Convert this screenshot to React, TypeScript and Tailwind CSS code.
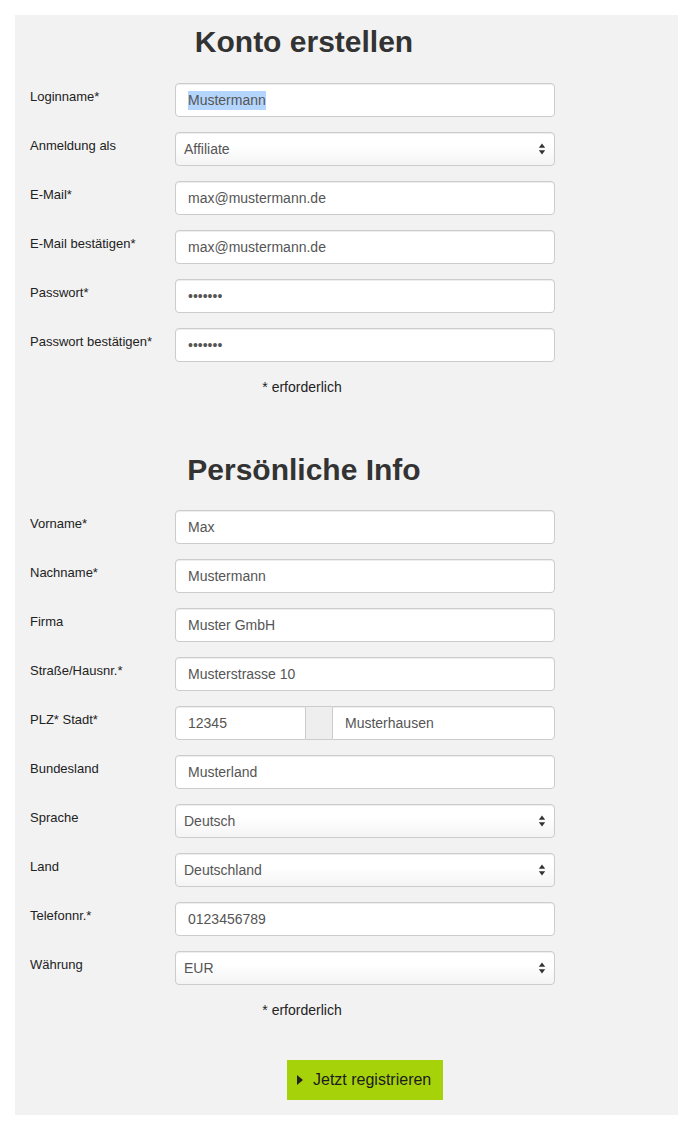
import React from 'react';

const font = { fontFamily: '"Liberation Sans", Arial, Helvetica, sans-serif' };

const inputBox =
  'h-[34px] w-[380px] shrink-0 bg-white border border-[#cccccc] rounded-[4px] shadow-[inset_0_1px_1px_rgba(0,0,0,0.075)] flex items-center text-[14px] text-[#555555]';

const SelectArrows: React.FC = () => (
  <svg width="8" height="14" viewBox="0 0 8 14" className="absolute right-[8px] top-1/2 -translate-y-1/2">
    <path d="M4 1.5 L7.2 5.8 L0.8 5.8 Z" fill="#333333" />
    <path d="M4 12.5 L7.2 8.2 L0.8 8.2 Z" fill="#333333" />
  </svg>
);

const Row: React.FC<{ label: string; children: React.ReactNode }> = ({ label, children }) => (
  <div className="flex h-[34px] mb-[15px]">
    <div className="w-[160px] shrink-0 pl-[15px] pt-[5px] text-[13px] leading-[18px] text-[#222222]">{label}</div>
    {children}
  </div>
);

const TextInput: React.FC<{ value: string; selected?: boolean }> = ({ value, selected }) => (
  <div className={`${inputBox} pl-[12px]`}>
    {selected ? <span className="bg-[#b4d5fe] leading-[19px]">{value}</span> : value}
  </div>
);

const SelectInput: React.FC<{ value: string }> = ({ value }) => (
  <div
    className={`${inputBox} relative pl-[8px] text-[#222222] bg-gradient-to-b from-white from-40% to-[#f4f4f4] shadow-[0_1px_1px_rgba(0,0,0,0.04)]`}
  >
    {value}
    <SelectArrows />
  </div>
);

const Required: React.FC = () => (
  <div className="w-[574px] text-center text-[14px] leading-[20px] text-[#222222]">* erforderlich</div>
);

export default function App() {
  return (
    <div className="bg-white min-h-[1131px] pt-[15px] pl-[15px]" style={font}>
      <div className="w-[663px] bg-[#f2f2f2] pb-[15px]">
        <h1 className="w-[578px] pt-[10px] text-center text-[30px] leading-[33px] font-bold text-[#333333]">
          Konto erstellen
        </h1>
        <div className="mt-[25px]">
          <Row label="Loginname*">
            <TextInput value="Mustermann" selected />
          </Row>
          <Row label="Anmeldung als">
            <SelectInput value="Affiliate" />
          </Row>
          <Row label="E-Mail*">
            <TextInput value="max@mustermann.de" />
          </Row>
          <Row label="E-Mail bestätigen*">
            <TextInput value="max@mustermann.de" />
          </Row>
          <Row label="Passwort*">
            <TextInput value="•••••••" />
          </Row>
          <Row label="Passwort bestätigen*">
            <TextInput value="•••••••" />
          </Row>
        </div>
        <Required />

        <h1 className="w-[578px] mt-[56px] text-center text-[30px] leading-[33px] font-bold text-[#333333]">
          Persönliche Info
        </h1>
        <div className="mt-[24px]">
          <Row label="Vorname*">
            <TextInput value="Max" />
          </Row>
          <Row label="Nachname*">
            <TextInput value="Mustermann" />
          </Row>
          <Row label="Firma">
            <TextInput value="Muster GmbH" />
          </Row>
          <Row label="Straße/Hausnr.*">
            <TextInput value="Musterstrasse 10" />
          </Row>
          <Row label="PLZ* Stadt*">
            <div className="flex w-[380px] shrink-0 h-[34px] text-[14px] text-[#555555]">
              <div className="w-[131px] h-full bg-white border border-[#cccccc] rounded-l-[4px] shadow-[inset_0_1px_1px_rgba(0,0,0,0.075)] flex items-center pl-[12px]">
                12345
              </div>
              <div className="w-[26px] h-full bg-[#eeeeee] border-y border-[#cccccc]" />
              <div className="flex-1 h-full bg-white border border-[#cccccc] rounded-r-[4px] shadow-[inset_0_1px_1px_rgba(0,0,0,0.075)] flex items-center pl-[12px]">
                Musterhausen
              </div>
            </div>
          </Row>
          <Row label="Bundesland">
            <TextInput value="Musterland" />
          </Row>
          <Row label="Sprache">
            <SelectInput value="Deutsch" />
          </Row>
          <Row label="Land">
            <SelectInput value="Deutschland" />
          </Row>
          <Row label="Telefonnr.*">
            <TextInput value="0123456789" />
          </Row>
          <Row label="Währung">
            <SelectInput value="EUR" />
          </Row>
        </div>
        <Required />

        <button
          type="button"
          className="mt-[40px] ml-[272px] w-[156px] h-[40px] bg-[#a6d20a] flex items-center pl-[10px] text-[16px] text-[#1c1c1c]"
        >
          <svg width="6" height="10" viewBox="0 0 6 10" className="mr-[10px]">
            <path d="M0 0 L6 5 L0 10 Z" fill="#222222" />
          </svg>
          Jetzt registrieren
        </button>
      </div>
    </div>
  );
}
